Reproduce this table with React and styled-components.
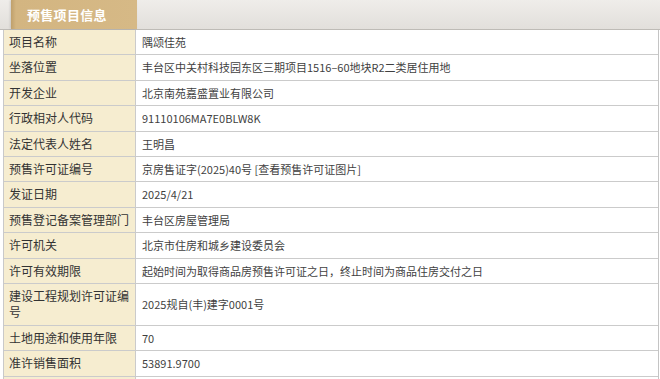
import React from "react";
import styled, { createGlobalStyle } from "styled-components";

const Global = createGlobalStyle`
  html, body { margin: 0; padding: 0; background: #ffffff; }
  body { font-family: "PingFang SC", "Noto Sans CJK SC", "Noto Sans", sans-serif; color: #333; }
`;

const Page = styled.div`
  width: 660px;
  height: 379px;
  overflow: hidden;
`;

const Header = styled.div`
  height: 29px;
  display: flex;
  align-items: stretch;
  padding-left: 11px;
  background: linear-gradient(to bottom, #efedea 0%, #e2dfdb 100%);
  border-bottom: 1px solid #bebbb6;
`;

const Tab = styled.div`
  width: 126px;
  box-sizing: border-box;
  display: flex;
  align-items: center;
  padding-left: 16px;
  padding-bottom: 1px;
  background: linear-gradient(to right, #bfa06c 0px, #d3b581 5px, #d6b986 100%);
  box-shadow: -1px 0 2px rgba(0, 0, 0, 0.12);
  color: #ffffff;
  font-size: 13px;
  font-weight: 700;
  letter-spacing: 0.3px;
`;

const Table = styled.div`
  margin: 0 1px 0 3px;
  border-left: 1px solid #c9c9c9;
  border-right: 1px solid #c4c4c4;
`;

const Row = styled.div`
  display: grid;
  grid-template-columns: 132px 1fr;
  border-bottom: 1px solid #cbcbcb;
`;

const Label = styled.div`
  background: #f6edd0;
  border-right: 1px solid #cbcbcb;
  padding: 4px 6px 4px 5px;
  font-size: 12px;
  line-height: 16.4px;
  color: #333;
  display: flex;
  align-items: center;
`;

const Value = styled.div`
  padding: 4px 6px;
  font-size: 11px;
  line-height: 16.4px;
  color: #3f3f3f;
  display: flex;
  align-items: center;
`;

const rows = [
  ["项目名称", "隅颂佳苑"],
  ["坐落位置", "丰台区中关村科技园东区三期项目1516–60地块R2二类居住用地"],
  ["开发企业", "北京南苑嘉盛置业有限公司"],
  ["行政相对人代码", "91110106MA7E0BLW8K"],
  ["法定代表人姓名", "王明昌"],
  ["预售许可证编号", "京房售证字(2025)40号 [查看预售许可证图片]"],
  ["发证日期", "2025/4/21"],
  ["预售登记备案管理部门", "丰台区房屋管理局"],
  ["许可机关", "北京市住房和城乡建设委员会"],
  ["许可有效期限", "起始时间为取得商品房预售许可证之日，终止时间为商品住房交付之日"],
  ["建设工程规划许可证编号", "2025规自(丰)建字0001号"],
  ["土地用途和使用年限", "70"],
  ["准许销售面积", "53891.9700"],
  ["\u00a0", "\u00a0"],
];

export default function App() {
  return (
    <Page>
      <Global />
      <Header>
        <Tab>预售项目信息</Tab>
      </Header>
      <Table>
        {rows.map(([k, v], i) => (
          <Row key={i}>
            <Label>{k}</Label>
            <Value>{v}</Value>
          </Row>
        ))}
      </Table>
    </Page>
  );
}
